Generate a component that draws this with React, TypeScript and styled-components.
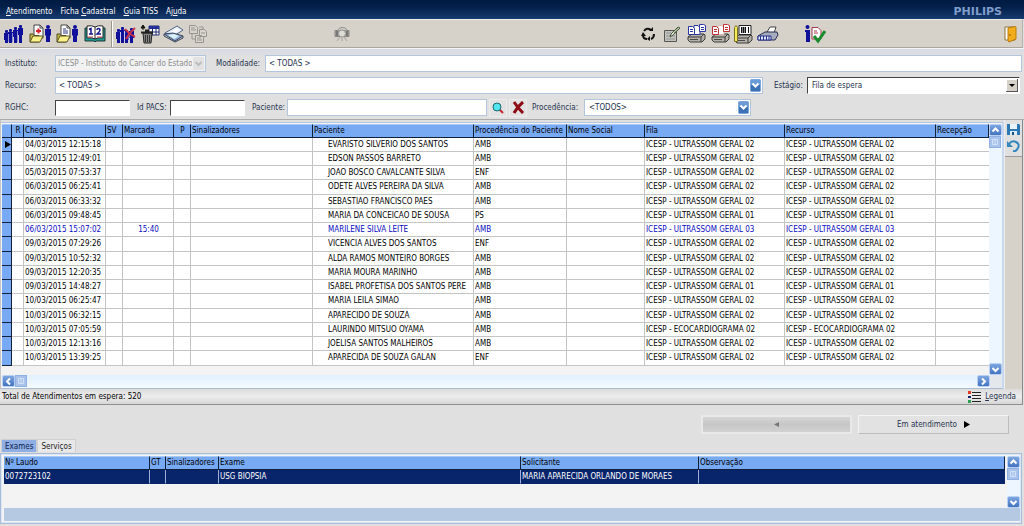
import React from "react";
import styled, { createGlobalStyle, css } from "styled-components";

const GlobalStyle = createGlobalStyle`
  * { box-sizing: border-box; }
  body {
    margin: 0;
    background: #e0e0e0;
    font-family: "DejaVu Sans Condensed", "DejaVu Sans", sans-serif;
    font-size: 8px;
    line-height: 12px;
    color: #000;
  }
  button, input, select { font: inherit; color: inherit; margin: 0; border-radius: 0; }
  svg { display: block; flex: none; }
`;

const ink = "#26344f";
const Page = styled.div`display: flex; flex-direction: column; min-height: 100vh;`;

/* ---------- title and menu bar ---------- */
const MenuBar = styled.header`
  display: flex; align-items: center; justify-content: space-between;
  height: 19px; padding: 4px 22px 0 6px;
  background: linear-gradient(#001b42 0, #04214c 40%, #173b70 100%);
`;
const Menu = styled.nav`display: flex; gap: 8px;`;
const MenuLink = styled.a`color: #fff; text-decoration: none; white-space: nowrap;`;
const Brand = styled.strong`
  font-family: "DejaVu Sans", sans-serif; font-size: 11px; color: #7f9dcc;
`;

/* ---------- toolbar ---------- */
const Toolbar = styled.div`
  display: flex; align-items: center; height: 29px; margin-right: 1px;
  background: #d6d2c9; border-top: 1px solid #f0eee8; border-bottom: 1px solid #aaa69e;
  border-right: 1px solid #b5b3b0;
`;
const ToolButton = styled.button<{ $w?: number }>`
  width: ${(p) => p.$w ?? 24}px; height: 26px; padding: 0; border: 0; background: none;
  display: flex; align-items: center; justify-content: center; flex: none;
`;
const ToolDivider = styled.div`
  width: 2px; height: 26px; margin: 0 1px 0 3px; background: #fff; border-left: 1px solid #99958d;
`;
const Spacer = styled.div<{ $grow: number }>`flex: ${(p) => p.$grow} 1 0px;`;

/* ---------- filters ---------- */
const Filters = styled.form`
  display: flex; flex-direction: column; gap: 5px; padding: 6px 2px 3px 5px;
  border-top: 1px solid #f5f5f7; border-bottom: 1px solid #aaa; color: ${ink};
  background: linear-gradient(#d9dbe4 0, #e0e0e0 8px);
`;
const FilterRow = styled.div`display: flex; align-items: center; height: 17px;`;
const FieldLabel = styled.label<{ $w: number; $gap?: number }>`
  flex: none; width: ${(p) => p.$w}px; margin-left: ${(p) => p.$gap ?? 0}px; white-space: nowrap;
`;
const flat = css`border: 1px solid #b4c6de; background: #fff;`;
const sunken = css`border: 1px solid #fff; border-top-color: #444; border-left-color: #444; background: #fff;`;
const TextBox = styled.input<{ $w: number; $flat?: boolean }>`
  width: ${(p) => p.$w}px; height: ${(p) => (p.$flat ? 17 : 16)}px; padding: 0 3px; outline: 0;
  ${(p) => (p.$flat ? flat : sunken)}
`;
const SelectWrap = styled.div<{ $w?: number; $grow?: boolean }>`
  display: grid; height: 17px; align-items: center;
  ${(p) => (p.$grow ? "flex: 1 1 0px; min-width: 0;" : `flex: none; width: ${p.$w}px;`)}
  > * { grid-area: 1 / 1; }
  > svg { justify-self: end; margin-right: 2px; pointer-events: none; }
`;
const Select = styled.select<{ $sunken?: boolean; $pad?: number }>`
  appearance: none; width: 100%; height: 17px; padding: 0 13px 0 ${(p) => p.$pad ?? 3}px; outline: 0;
  ${(p) => (p.$sunken ? sunken : flat)}
  &:disabled { color: #8e8e8e; opacity: 1; background: #f2f2f2; }
`;
const SmallButton = styled.button`
  width: 18px; height: 18px; margin-left: 2px; padding: 0; border: 1px solid #ececec;
  background: #e2e2e2; display: flex; align-items: center; justify-content: center;
`;

/* ---------- data grids ---------- */
const GridArea = styled.main`
  display: flex; border-left: 1px solid #c5c5c5; border-right: 1px solid #8a8a8a; margin-right: 1px;
`;
const GridPane = styled.div`
  flex: 1; min-width: 0; margin-top: 2px; padding: 1px 0 0 1px; background: #f3f3f3;
  border-top: 1px solid #b4c6de; border-right: 2px solid #c8d8ee; border-bottom: 1px solid #aabbd2;
`;
const GridBody = styled.div`display: flex;`;
const TableSpace = styled.div<{ $below: number }>`flex: 1; min-width: 0; padding-bottom: ${(p) => p.$below}px;`;
const Table = styled.table`
  width: 100%; table-layout: fixed; border-collapse: separate; border-spacing: 0;
`;
const Th = styled.th<{ $center?: boolean }>`
  height: 14px; padding: 0 0 0 1px; overflow: hidden; white-space: nowrap; font-weight: normal;
  text-align: ${(p) => (p.$center ? "center" : "left")}; line-height: 12px; background: #78a9f3;
  border-top: 1px solid #a9c9fa; border-right: 1px solid #10203c; border-bottom: 1px solid #10203c;
`;
const Row = styled.tr<{ $highlight?: boolean }>`
  height: 14px; color: ${(p) => (p.$highlight ? "#0a0ac0" : "#000")};
  &:nth-child(4n) { height: 15px; }
`;
const Td = styled.td<{ $indent?: number; $center?: boolean }>`
  padding: 0 0 0 ${(p) => p.$indent ?? 1}px; overflow: hidden; white-space: nowrap; line-height: 12px;
  text-align: ${(p) => (p.$center ? "center" : "left")}; background: #fff;
  border-right: 1px solid #c4c4c4; border-bottom: 1px solid #c4c4c4;
  &:last-child { border-right: 0; }
`;
const Marker = styled.td`
  padding: 0 0 0 2px; background: #78a9f3; border-right: 1px solid #10203c; border-bottom: 1px solid #10203c;
`;
const VTrack = styled.div`
  width: 13px; flex: none; display: flex; flex-direction: column; background: #edf5fe;
`;
const HTrack = styled.div`display: flex; height: 13px; background: linear-gradient(#e2f0ff, #f4faff);`;
const Corner = styled.div`width: 12px; background: #e4e8ec;`;
const ArrowButton = styled.button`
  width: 13px; height: 12px; padding: 0; border: 1px solid #b9d0f2; border-radius: 2px; flex: none;
  background: linear-gradient(#7ea6e2, #4274c0); display: flex; align-items: center; justify-content: center;
`;
const Thumb = styled.div`
  width: 12px; height: 12px; border: 1px solid #8fb0e2; background: #a9c2ea; flex: none;
  display: flex; align-items: center; justify-content: center;
`;
const SideBar = styled.aside`
  width: 18px; background: #d6d2c9; border-left: 1px solid #eee;
`;
const SideTools = styled.div`
  display: flex; flex-direction: column; gap: 2px; padding: 3px 0 3px 0; border-bottom: 1px solid #9a9a9a; background: #e0e0e0;
  button { width: 16px; height: 14px; padding: 0; border: 0; background: none; display: flex; justify-content: center; }
`;
const StatusBar = styled.div`
  display: flex; align-items: center; justify-content: space-between; height: 16px; padding: 0 6px 0 2px;
  margin-right: 1px; background: linear-gradient(#dcdcdc, #ececec 50%, #d6d6d6);
  border-bottom: 1px solid #909090; border-right: 1px solid #8a8a8a;
`;
const LegendButton = styled.button`
  display: flex; align-items: center; gap: 4px; padding: 0; border: 0; background: none; color: ${ink};
`;

/* ---------- footer ---------- */
const Actions = styled.div`display: flex; justify-content: flex-end; gap: 6px; padding: 10px 15px 5px 0;`;
const StageButton = styled.button`
  width: 151px; height: 19px; padding: 0; display: flex; align-items: center; justify-content: center; gap: 6px;
  border: 1px solid #f4f4f4; border-right-color: #bdbdbd; border-bottom-color: #bdbdbd;
  background: #e2e2e2; color: ${ink};
  &:disabled { background: linear-gradient(#d6d6d6, #c6c6c6 50%, #d2d2d2); border-width: 2px; border-color: #e9e9e9; }
`;
const Tabs = styled.div`display: flex; padding-left: 1px;`;
const Tab = styled.button<{ $active?: boolean }>`
  height: 13px; padding: 0 3px; border: 1px solid #d0d0d0; border-bottom: 0; line-height: 11px;
  background: ${(p) => (p.$active ? "#8faee3" : "#e8e8e8")};
  color: ${(p) => (p.$active ? "#0c1e50" : "#222")};
`;
const ExamPanel = styled.section`
  margin: 1px 2px 0 0; padding: 2px 1px 2px 3px; background: #f3f3f3;
  border: 1px solid #a9bcd8; box-shadow: inset 0 0 0 1px #dbe6f5;
`;
const ExamBody = styled.div`display: flex; gap: 2px;`;
const ExamTd = styled(Td)`
  height: 14px; background: #08246b; color: #fff; border-right-color: #9fb0d8; border-bottom: 1px solid #08246b;
`;
const ExamStrip = styled.div`height: 13px; background: #b6c9e2;`;

/* ---------- small drawings ---------- */
const navy = "#10109a";
const Person = ({ x, y, h }: { x: number; y: number; h: number }) => (
  <g fill={navy}>
    <circle cx={x + 2} cy={y + 2} r="2" />
    <path d={`M${x - 1} ${y + 4}h6v${h / 2 - 2}h-1v${h / 2 - 2}h-4v-${h / 2 - 2}h-1z`} />
  </g>
);
const Slim = ({ x, y }: { x: number; y: number }) => (
  <g fill={navy}>
    <rect x={x} y={y} width="3" height="3" rx="1" />
    <path d={`M${x - 1} ${y + 3}h5v7h-1V19h-3V${y + 10}h-1z`} />
  </g>
);
const Group = () => (
  <svg width="19" height="20" viewBox="0 0 19 20">
    <Slim x={1} y={6} /><Slim x={5} y={5} /><Slim x={10} y={3} /><Slim x={15} y={1} />
    <path d="M4.500 10v8M8.500 9v9M13.500 7v11" stroke="#8f93cf" />
  </svg>
);
const GroupRemove = () => (
  <svg width="20" height="20" viewBox="0 0 20 20">
    <Slim x={1} y={5} /><Slim x={5} y={3} /><Slim x={9} y={6} /><Slim x={14} y={4} />
    <path d="M4.500 8v9M8.500 7v11M13 9v9" stroke="#c9cbe6" />
    <path d="M9 5q4 5 10 8M19 4q-6 5-9 11" stroke="#c9304a" strokeWidth="2" fill="none" />
  </svg>
);
const FolderPerson = ({ cross }: { cross?: boolean }) => (
  <svg width="23" height="20" viewBox="0 0 23 20">
    <path d="M5 1h6l3 3v10H5z" fill="#fff" stroke="#444" />
    <path d="M11 1v3h3" fill="none" stroke="#444" />
    {cross ? <path d="M7 7h5M9.500 4.500v5" stroke="#d3222a" strokeWidth="2" /> : <path d="M7 5h3M7 7h5M7 9h5" stroke="#333a85" />}
    <path d="M1 18V10h3l1 1.500h5V18z" fill="#c9b948" stroke="#4e4a24" />
    <path d="M1 18l3-6h10l-3 6z" fill="#fdf28a" stroke="#5c5626" />
    <Person x={17} y={1} h={17} />
  </svg>
);
const Calendar = () => (
  <svg width="22" height="18" viewBox="0 0 22 18">
    <path d="M1 3h20v13h-9l-1 1-1-1H1z" fill="#209a94" stroke="#1c3432" />
    <path d="M3 1q5-1 8 1 3-2 8-1v12q-5-1-8 1-3-2-8-1z" fill="#fff" stroke="#222" />
    <path d="M11 2v12" stroke="#222" />
    <path d="M5 4.500l2-1v5M5 9h4M13 5q0-1.500 1.500-1.500T16 5t-3 4h4" fill="none" stroke="#15158e" strokeWidth="1.500" />
    <path d="M4 12h5M13 12h5" stroke="#d3505c" />
  </svg>
);
const TrashGrid = () => (
  <svg width="20" height="20" viewBox="0 0 20 20">
    <path d="M3 6V3M1 4l2-3 2 3z" stroke="#111" fill="#111" />
    <path d="M9 2h10v9H9z" fill="#fff" stroke="#222a6e" />
    <path d="M9 2h10v3H9z" fill="#23309a" />
    <path d="M9 8h10M12.500 4v7M16 4v7" stroke="#222a6e" />
    <path d="M3 9h9l-1 10H4z" fill="#868686" stroke="#222" />
    <path d="M1 8.500h12M5 6.500h4" stroke="#222" strokeWidth="2" />
    <path d="M5.500 11v7M7.500 11v7M9.500 11v7" stroke="#333" />
  </svg>
);
const Scanner = () => (
  <svg width="22" height="18" viewBox="0 0 22 18">
    <path d="M2 8L14 1l6 4-9 6z" fill="#e6edf8" stroke="#53657f" />
    <path d="M6 8l8-5 3 2-7 4z" fill="#fafcff" />
    <path d="M1 9l9-1 10 3-8 5z" fill="#93abd0" stroke="#35455f" />
    <path d="M5 10l6-1 5 2-5 3z" fill="#d8f1fb" />
    <path d="M1 9v2l11 6 8-4v-2" fill="none" stroke="#35455f" />
  </svg>
);
const LinkedDocs = () => (
  <svg width="20" height="20" viewBox="0 0 20 20" fill="#d8d5ce" stroke="#97948e">
    <path d="M1.500 1.500h6l2 2v6h-8zM11.500 5.500h5l2 2v5h-7zM7.500 11.500h6l2 2v5h-8z" />
    <path d="M3 4h4M3 6h5M13 9h4M9 14h4M9 16h5M4 10v5h3M11 3h4v2" fill="none" />
  </svg>
);
const Camera = () => (
  <svg width="16" height="16" viewBox="0 0 16 16">
    <path d="M1 4.500h14v6H1z" fill="#a8a6a2" stroke="#858380" /><path d="M5 2.500l2-1h3l2 1 1 2H4z" fill="#c8c6c1" stroke="#9b9995" />
    <path d="M3 5v5M13 5v5" stroke="#777" strokeWidth="2" />
    <circle cx="8" cy="7.500" r="3.500" fill="#dedcd7" stroke="#9a9894" />
    <path d="M6 11l-3 4M10 11l3 4M8 11v4" stroke="#a4a29e" fill="none" />
  </svg>
);
const Recycle = () => (
  <svg width="16" height="16" viewBox="0 0 16 16" fill="none" stroke="#111" strokeWidth="2">
    <path d="M4 5q3-4 7-1M14 8q0 4-3 5M7 13q-4 0-4-4" />
    <path d="M9 5h4V1zM10 10v5l-3-2zM1 10l2-4 3 4z" fill="#111" stroke="none" />
  </svg>
);
const EditSheet = () => (
  <svg width="18" height="18" viewBox="0 0 18 18">
    <path d="M1.500 5.500h12v11h-12z" fill="#c2c2c0" stroke="#55564f" />
    <path d="M3 8h5M3 11h9M3 14h9" stroke="#939390" />
    <path d="M7 12l1-3 7-7 2 1-7 7z" fill="#e7eedb" stroke="#46563e" /><path d="M11 8l5-6" stroke="#6d8d56" />
  </svg>
);
const PrinterBase = () => (
  <g>
    <path d="M2 14l4-3h12l1 1v4l-3 3H4l-2-2z" fill="#b5b1a8" stroke="#3c3c3c" />
    <path d="M2 14h13l3-3M15 14v5" fill="none" stroke="#3c3c3c" />
    <path d="M4 16h8v1H4z" fill="#4b4b48" />
  </g>
);
const PrintDocs = ({ c, mid }: { c: string; mid: string }) => (
  <svg width="21" height="21" viewBox="0 0 21 21">
    <PrinterBase />
    <path d="M8 2.500h4l2 2v7H8z" fill="#fff" stroke={mid} />
    <path d="M2.500 3.500h4l2 2v6h-6z" fill="#fff" stroke={c} />
    <path d="M13.500 1.500h4l2 1v6h-6z" fill="#fff" stroke={c} />
    <path d="M4 6.500h3M4 8.500h3M15 4.500h3M15 6.500h3" stroke={c} />
  </svg>
);
const PrintBarcode = () => (
  <svg width="22" height="20" viewBox="0 0 22 20">
    <PrinterBase />
    <path d="M6 1.500h12v9H6z" fill="#fff" stroke="#222" />
    <path d="M8.500 3v6M12.500 3v6M15.500 3v6" stroke="#111" /><path d="M10.500 3v6" stroke="#111" strokeWidth="2" />
    <path d="M1.500 3.500l1.500-2 1.500 2v14h-3z" fill="#f6ee58" stroke="#777025" />
  </svg>
);
const PrintKeys = () => (
  <svg width="22" height="18" viewBox="0 0 22 18">
    <path d="M10 7l3-5h6l-2 6z" fill="#fff" stroke="#444" />
    <path d="M1 11l7-4h12l1 3-3 5H1z" fill="#a6acbc" stroke="#293154" />
    <path d="M1 11h13v4H1z" fill="#e5eaff" stroke="#252f8c" />
    <path d="M3.500 11v4M6.500 11v4M9.500 11v4M12 11v4" stroke="#252f8c" />
  </svg>
);
const InfoCheck = () => (
  <svg width="22" height="20" viewBox="0 0 22 20">
    <circle cx="3.500" cy="3" r="2" fill={navy} /><path d="M1 6h5v12H2V8H1z" fill={navy} />
    <path d="M8 3.500h6l3 3V15H8z" fill="#fff" stroke="#a43b50" /><path d="M10 7h3M10 9h4" stroke="#a43b50" />
    <path d="M10 12l4 5 7-10" fill="none" stroke="#1b8a2e" strokeWidth="3" />
  </svg>
);
const Door = () => (
  <svg width="13" height="18" viewBox="0 0 13 18">
    <path d="M1 2h10v13H1z" fill="#fff" stroke="#8a7434" />
    <path d="M4 3l7-1.500q1 0 1 1V14l-7 3-1-1z" fill="#f3ac1c" stroke="#b87a0d" /><path d="M6 9v2" stroke="#8f5c05" />
  </svg>
);
const Save = () => (
  <svg width="13" height="13" viewBox="0 0 13 13">
    <path d="M0 1h12l1 1v10H0z" fill="#2b78b5" /><path d="M3 1h7v5H3z" fill="#e8f3fb" /><path d="M3 8h7v4H3z" fill="#dcebf5" /><path d="M5 9h2v3H5z" fill="#164e7c" />
  </svg>
);
const Undo = () => (
  <svg width="13" height="13" viewBox="0 0 13 13">
    <path d="M2 5q3-4 7-2t2 6-5 3" fill="none" stroke="#3387bd" strokeWidth="2" /><path d="M0 2v6h6z" fill="#3387bd" />
  </svg>
);
const Lens = () => (
  <svg width="12" height="12" viewBox="0 0 12 12">
    <path d="M7 7l4 4" stroke="#c4262c" strokeWidth="2" /><circle cx="5" cy="5" r="4" fill="#54e6ee" stroke="#1c6a74" />
  </svg>
);
const Cross = () => (
  <svg width="13" height="13" viewBox="0 0 13 13"><path d="M2 1q4 6 9 11M11 1Q5 6 2 12" fill="none" stroke="#8e0c14" strokeWidth="3" /></svg>
);
const BlueDrop = () => (
  <svg width="11" height="13" viewBox="0 0 11 13">
    <rect x="0.500" y="0.500" width="10" height="12" rx="1" fill="#3c71b5" stroke="#7ea6d8" /><path d="M1 1h9v5H1z" fill="#6a9bd6" />
    <path d="M2.500 4.500l3 3 3-3" fill="none" stroke="#fff" strokeWidth="2" />
  </svg>
);
const GreyDrop = () => (
  <svg width="11" height="13" viewBox="0 0 11 13"><path d="M0 0h11v13H0z" fill="#e2e2e2" /><path d="M2.500 5l3 3 3-3" fill="none" stroke="#bdbdbd" strokeWidth="2" /></svg>
);
const ClassicDrop = () => (
  <svg width="12" height="13" viewBox="0 0 12 13">
    <path d="M0 0h12v13H0z" fill="#555" /><path d="M0 0h11v12H0z" fill="#fff" /><path d="M1 1h10v11H1z" fill="#d6d2c9" /><path d="M3 5h6L6 8z" fill="#000" />
  </svg>
);
const chevrons = { up: "M1.500 5.500l3-3 3 3", down: "M1.500 3l3 3 3-3", left: "M6 1.500l-3 3 3 3", right: "M3 1.500l3 3-3 3" };
const Arrow = ({ dir, label }: { dir: keyof typeof chevrons; label: string }) => (
  <ArrowButton type="button" aria-label={label}>
    <svg width="9" height="9" viewBox="0 0 9 9"><path d={chevrons[dir]} fill="none" stroke="#fff" strokeWidth="2" /></svg>
  </ArrowButton>
);
const Grip = () => <svg width="6" height="6" viewBox="0 0 6 6"><path d="M.5.5h5v5h-5zM3 1v4" fill="none" stroke="#d2e1f8" /></svg>;
const LegendIcon = () => (
  <svg width="13" height="12" viewBox="0 0 13 12">
    <path d="M0 0h3v3H0z" fill="#dd3b25" /><path d="M0 5h3v2H0z" fill="#15246e" /><path d="M0 9h3v3H0z" fill="#2f9c52" />
    <path d="M4 1.500h9M4 4.500h9M4 7.500h9M4 10.500h9" stroke="#222" />
  </svg>
);
const Triangle = ({ left, c = "#000" }: { left?: boolean; c?: string }) => (
  <svg width="7" height="7" viewBox="0 0 7 7"><path d={left ? "M6 1v5L1 3.500z" : "M1 0v7l6-3.500z"} fill={c} /></svg>
);

/* ---------- data ---------- */
type Entry = { at: string; name: string; origin: string; queue: string; marked?: string };
const G = (n: string) => `ICESP - ULTRASSOM GERAL ${n}`;
const entries: Entry[] = [
  { at: "04/03/2015 12:15:18", name: "EVARISTO SILVERIO DOS SANTOS", origin: "AMB", queue: G("02") },
  { at: "04/03/2015 12:49:01", name: "EDSON PASSOS BARRETO", origin: "AMB", queue: G("02") },
  { at: "05/03/2015 07:53:37", name: "JOAO BOSCO CAVALCANTE SILVA", origin: "ENF", queue: G("02") },
  { at: "06/03/2015 06:25:41", name: "ODETE ALVES PEREIRA DA SILVA", origin: "AMB", queue: G("02") },
  { at: "06/03/2015 06:33:32", name: "SEBASTIAO FRANCISCO PAES", origin: "AMB", queue: G("02") },
  { at: "06/03/2015 09:48:45", name: "MARIA DA CONCEICAO DE SOUSA", origin: "PS", queue: G("01") },
  { at: "06/03/2015 15:07:02", name: "MARILENE SILVA LEITE", origin: "AMB", queue: G("03"), marked: "15:40" },
  { at: "09/03/2015 07:29:26", name: "VICENCIA ALVES DOS SANTOS", origin: "ENF", queue: G("02") },
  { at: "09/03/2015 10:52:32", name: "ALDA RAMOS MONTEIRO BORGES", origin: "AMB", queue: G("02") },
  { at: "09/03/2015 12:20:35", name: "MARIA MOURA MARINHO", origin: "AMB", queue: G("02") },
  { at: "09/03/2015 14:48:27", name: "ISABEL PROFETISA DOS SANTOS PERE", origin: "AMB", queue: G("01") },
  { at: "10/03/2015 06:25:47", name: "MARIA LEILA SIMAO", origin: "AMB", queue: G("02") },
  { at: "10/03/2015 06:32:15", name: "APARECIDO DE SOUZA", origin: "AMB", queue: G("02") },
  { at: "10/03/2015 07:05:59", name: "LAURINDO MITSUO OYAMA", origin: "AMB", queue: "ICESP - ECOCARDIOGRAMA 02" },
  { at: "10/03/2015 12:13:16", name: "JOELISA SANTOS MALHEIROS", origin: "AMB", queue: G("02") },
  { at: "10/03/2015 13:39:25", name: "APARECIDA DE SOUZA GALAN", origin: "ENF", queue: G("02") },
];
const columns: [string, number | undefined][] = [
  ["", 10], ["R", 12], ["Chegada", 82], ["SV", 17], ["Marcada", 51], ["P", 17], ["Sinalizadores", 122],
  ["Paciente", 161], ["Procedência do Paciente", 93], ["Nome Social", 78], ["Fila", 140], ["Recurso", 151], ["Recepção", undefined],
];
const examColumns: [string, number | undefined][] = [
  ["Nº Laudo", 146], ["GT", 16], ["Sinalizadores", 53], ["Exame", 302], ["Solicitante", 178], ["Observação", undefined],
];

export default function App() {
  return (
    <Page>
      <GlobalStyle />
      <MenuBar>
        <Menu>
          <MenuLink href="#"><u>A</u>tendimento</MenuLink>
          <MenuLink href="#">Ficha <u>C</u>adastral</MenuLink>
          <MenuLink href="#"><u>G</u>uia TISS</MenuLink>
          <MenuLink href="#">Aj<u>u</u>da</MenuLink>
        </Menu>
        <Brand>PHILIPS</Brand>
      </MenuBar>

      <Toolbar>
        <ToolButton $w={27} aria-label="Fila"><Group /></ToolButton>
        <ToolButton $w={27} aria-label="Ficha clínica"><FolderPerson cross /></ToolButton>
        <ToolButton $w={27} aria-label="Ficha cadastral"><FolderPerson /></ToolButton>
        <ToolButton $w={27} aria-label="Agenda"><Calendar /></ToolButton>
        <ToolDivider />
        <ToolButton aria-label="Remover da fila"><GroupRemove /></ToolButton>
        <ToolButton aria-label="Excluir"><TrashGrid /></ToolButton>
        <ToolButton aria-label="Digitalizar"><Scanner /></ToolButton>
        <ToolButton aria-label="Vincular" disabled><LinkedDocs /></ToolButton>
        <Spacer $grow={120} />
        <ToolButton aria-label="Capturar" disabled><Camera /></ToolButton>
        <Spacer $grow={282} />
        <ToolButton aria-label="Atualizar"><Recycle /></ToolButton>
        <ToolButton aria-label="Editar"><EditSheet /></ToolButton>
        <ToolButton aria-label="Imprimir fichas"><PrintDocs c="#2a36a0" mid="#2a36a0" /></ToolButton>
        <ToolButton aria-label="Imprimir guias"><PrintDocs c="#bf3038" mid="#d8b4ac" /></ToolButton>
        <ToolButton aria-label="Imprimir etiquetas"><PrintBarcode /></ToolButton>
        <ToolButton aria-label="Imprimir protocolo"><PrintKeys /></ToolButton>
        <Spacer $grow={23} />
        <ToolButton aria-label="Confirmar"><InfoCheck /></ToolButton>
        <Spacer $grow={171} />
        <ToolButton aria-label="Sair"><Door /></ToolButton>
      </Toolbar>

      <Filters>
        <FilterRow>
          <FieldLabel $w={50} htmlFor="instituto">Instituto:</FieldLabel>
          <SelectWrap $w={151}>
            <Select id="instituto" disabled $pad={2}><option>ICESP - Instituto do Cancer do Estado</option></Select>
            <GreyDrop />
          </SelectWrap>
          <FieldLabel $w={49} $gap={10} htmlFor="modalidade">Modalidade:</FieldLabel>
          <SelectWrap $grow><Select id="modalidade"><option>&lt; TODAS &gt;</option></Select></SelectWrap>
        </FilterRow>
        <FilterRow>
          <FieldLabel $w={50} htmlFor="recurso">Recurso:</FieldLabel>
          <SelectWrap $grow><Select id="recurso"><option>&lt; TODAS &gt;</option></Select><BlueDrop /></SelectWrap>
          <FieldLabel $w={33} $gap={11} htmlFor="estagio">Estágio:</FieldLabel>
          <SelectWrap $w={213}>
            <Select id="estagio" $sunken $pad={4}><option>Fila de espera</option></Select><ClassicDrop />
          </SelectWrap>
          <FieldLabel as="span" $w={2} />
        </FilterRow>
        <FilterRow>
          <FieldLabel $w={50} htmlFor="rghc">RGHC:</FieldLabel>
          <TextBox id="rghc" $w={75} />
          <FieldLabel $w={33} $gap={7} htmlFor="pacs">Id PACS:</FieldLabel>
          <TextBox id="pacs" $w={75} />
          <FieldLabel $w={35} $gap={7} htmlFor="paciente">Paciente:</FieldLabel>
          <TextBox id="paciente" $w={200} $flat />
          <SmallButton type="button" aria-label="Pesquisar"><Lens /></SmallButton>
          <SmallButton type="button" aria-label="Limpar"><Cross /></SmallButton>
          <FieldLabel $w={52} $gap={5} htmlFor="procedencia">Procedência:</FieldLabel>
          <SelectWrap $w={167}>
            <Select id="procedencia" $pad={4}><option>&lt;TODOS&gt;</option></Select><BlueDrop />
          </SelectWrap>
        </FilterRow>
      </Filters>

      <GridArea>
        <GridPane>
          <GridBody>
            <TableSpace $below={9}>
              <Table>
                <colgroup>{columns.map(([n, w]) => <col key={n} width={w} />)}</colgroup>
                <thead>
                  <tr>{columns.map(([n]) => <Th key={n} $center={n.length === 1}>{n}</Th>)}</tr>
                </thead>
                <tbody>
                  {entries.map((e, i) => (
                    <Row key={e.at} $highlight={!!e.marked}>
                      <Marker>{i === 0 && <Triangle />}</Marker>
                      <Td /><Td>{e.at}</Td><Td /><Td $center>{e.marked}</Td><Td /><Td />
                      <Td $indent={15}>{e.name}</Td><Td>{e.origin}</Td><Td /><Td>{e.queue}</Td><Td>{e.queue}</Td><Td />
                    </Row>
                  ))}
                </tbody>
              </Table>
            </TableSpace>
            <VTrack>
              <Arrow dir="up" label="Subir" /><Thumb><Grip /></Thumb>
              <Spacer $grow={1} />
              <Arrow dir="down" label="Descer" />
            </VTrack>
          </GridBody>
          <HTrack>
            <Arrow dir="left" label="Esquerda" /><Thumb><Grip /></Thumb><Spacer $grow={1} /><Arrow dir="right" label="Direita" /><Corner />
          </HTrack>
        </GridPane>
        <SideBar>
          <SideTools>
            <button type="button" aria-label="Salvar"><Save /></button>
            <button type="button" aria-label="Desfazer"><Undo /></button>
          </SideTools>
        </SideBar>
      </GridArea>

      <StatusBar>
        <span>Total de Atendimentos em espera: 520</span>
        <LegendButton type="button"><LegendIcon /><span><u>L</u>egenda</span></LegendButton>
      </StatusBar>

      <Actions>
        <StageButton type="button" disabled aria-label="Voltar"><Triangle left c="#777" /></StageButton>
        <StageButton type="button">Em atendimento <Triangle /></StageButton>
      </Actions>
      <Tabs role="tablist">
        <Tab type="button" role="tab" aria-selected $active>Exames</Tab>
        <Tab type="button" role="tab">Serviços</Tab>
      </Tabs>
      <ExamPanel>
        <ExamBody>
          <TableSpace $below={24}>
            <Table>
              <colgroup>{examColumns.map(([n, w]) => <col key={n} width={w} />)}</colgroup>
              <thead><tr>{examColumns.map(([n]) => <Th key={n}>{n}</Th>)}</tr></thead>
              <tbody>
                <tr>
                  <ExamTd>0072723102</ExamTd><ExamTd /><ExamTd /><ExamTd>USG BIOPSIA</ExamTd>
                  <ExamTd>MARIA APARECIDA ORLANDO DE MORAES</ExamTd><ExamTd />
                </tr>
              </tbody>
            </Table>
          </TableSpace>
          <VTrack>
            <Arrow dir="up" label="Subir exames" /><Thumb><Grip /></Thumb><Spacer $grow={1} /><Arrow dir="down" label="Descer exames" />
          </VTrack>
        </ExamBody>
        <ExamStrip />
      </ExamPanel>
    </Page>
  );
}
